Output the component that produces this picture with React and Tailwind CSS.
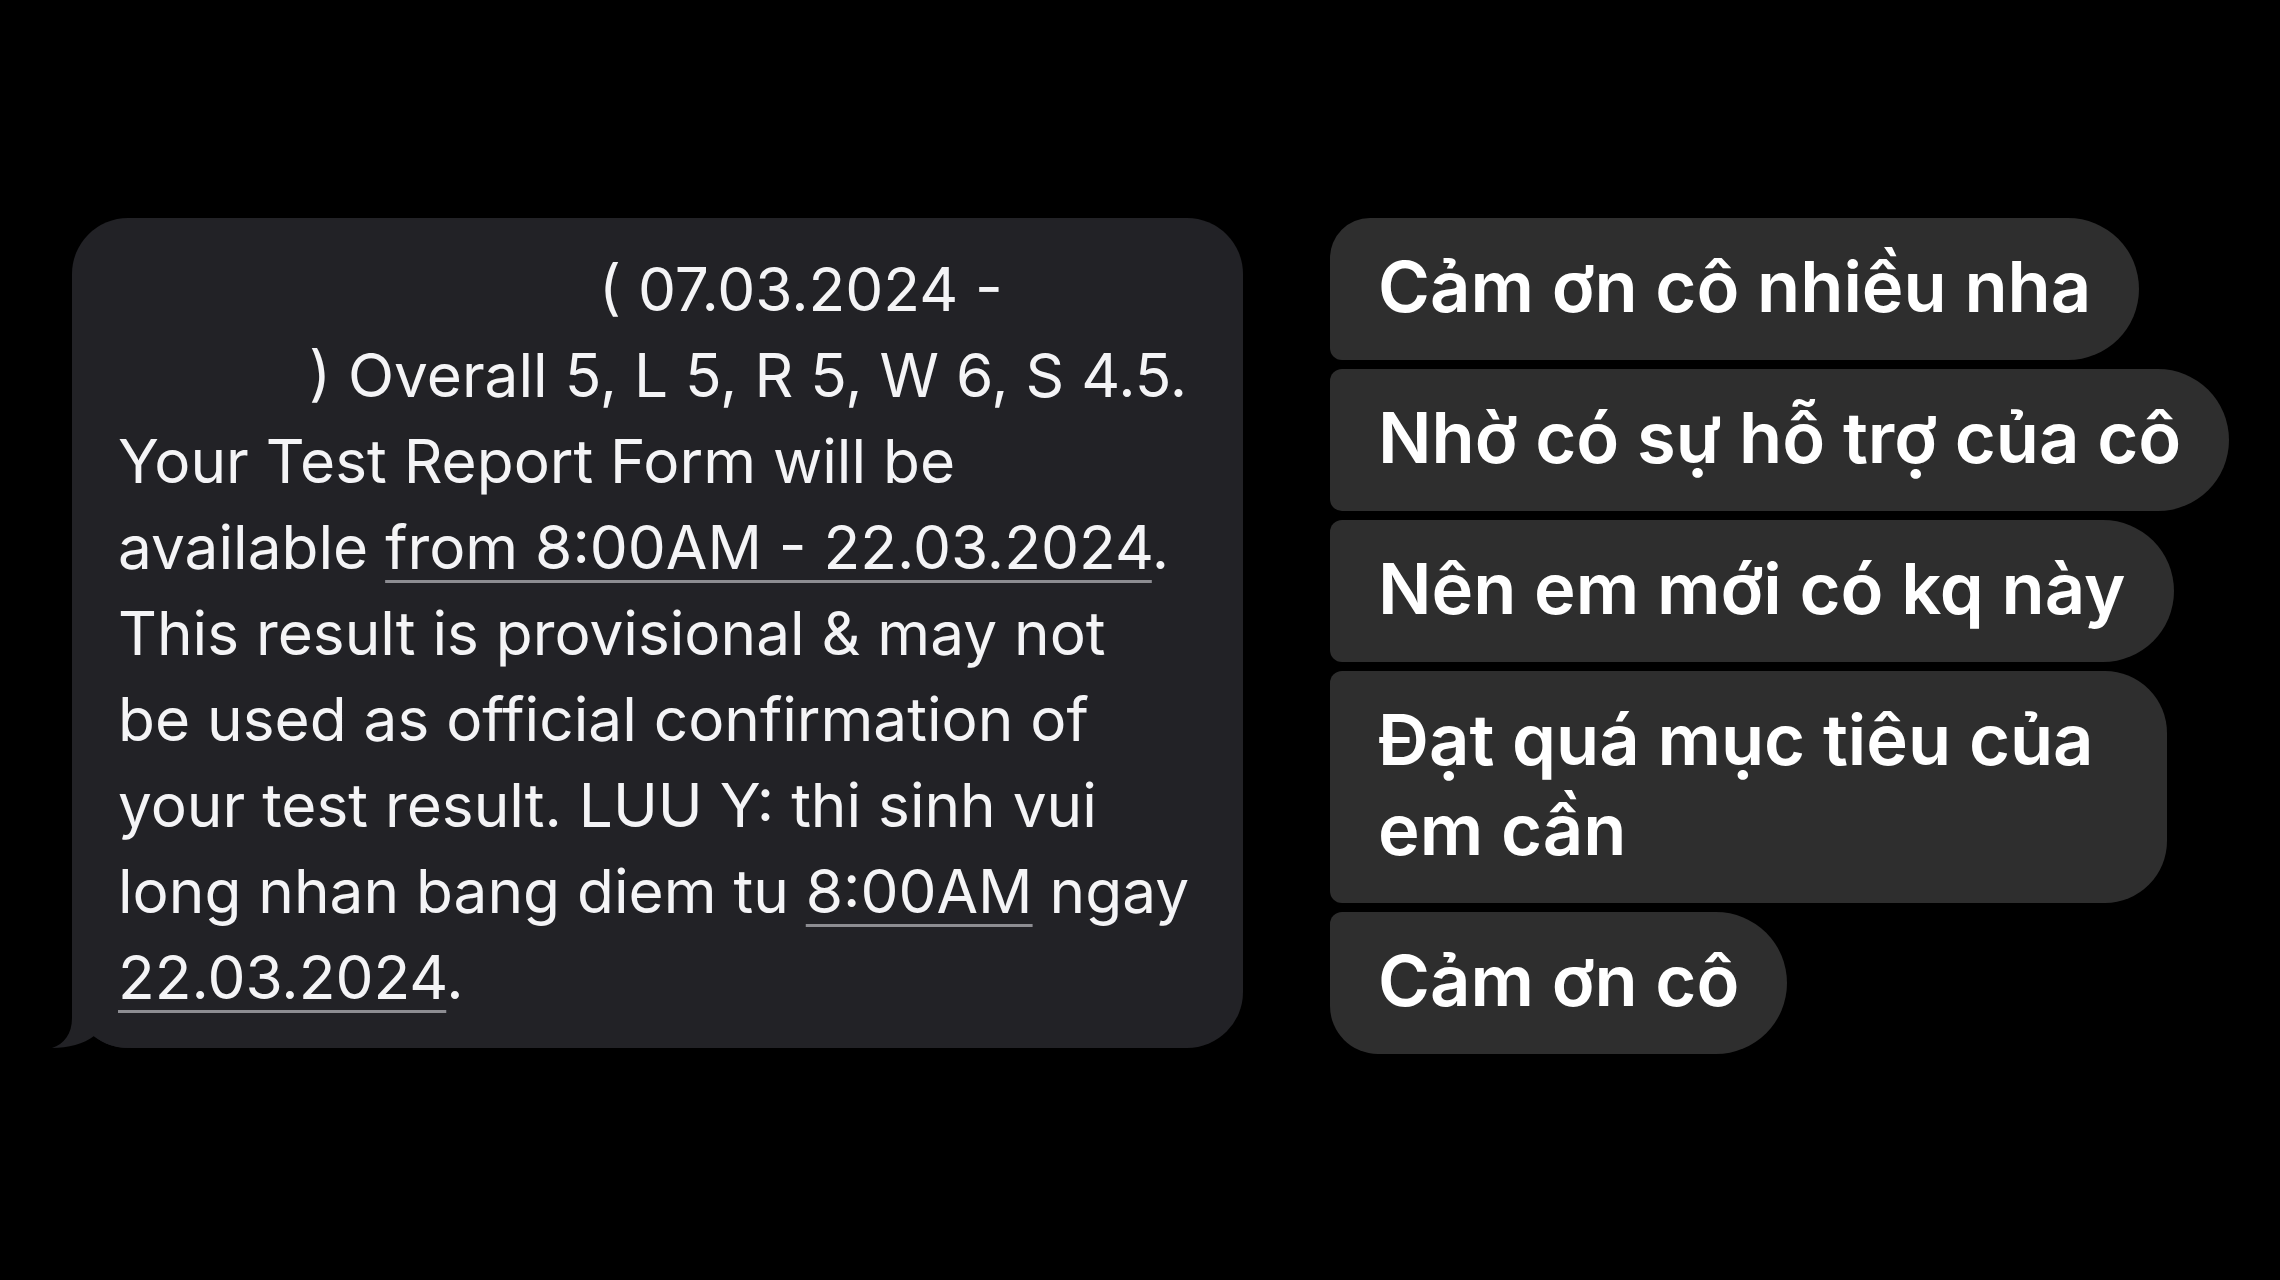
import React from "react";

const U = "underline decoration-[#8d8d92] decoration-[length:3px] underline-offset-[11px]";

function LeftBubble() {
  return (
    <div className="relative w-[1171px] shrink-0 rounded-[56px] bg-[#222226] pt-[29px] pb-[27px] pl-[46px] text-[60.3px] leading-[86px] text-[#f4f4f6] [font-family:Inter,'Liberation_Sans',sans-serif]">
      <svg
        className="absolute left-[-20px] bottom-0"
        width="80"
        height="60"
        viewBox="0 0 80 60"
      >
        <path
          d="M20 0 L20 30 C20 46 12 56 0 60 C16 60 32 56 42 48 C52 56 62 60 80 60 L80 0 Z"
          fill="#222226"
        />
      </svg>
      <div className="relative flex flex-col whitespace-pre">
        <div className="pl-[481px]">( 07.03.2024 -</div>
        <div className="pl-[191px]">) Overall 5, L 5, R 5, W 6, S 4.5.</div>
        <div>Your Test Report Form will be</div>
        <div>
          available <span className={U}>from 8:00AM - 22.03.2024</span>.
        </div>
        <div>This result is provisional &amp; may not</div>
        <div>be used as official confirmation of</div>
        <div>your test result. LUU Y: thi sinh vui</div>
        <div>
          long nhan bang diem tu <span className={U}>8:00AM</span> ngay
        </div>
        <div>
          <span className={U}>22.03.2024</span>.
        </div>
      </div>
    </div>
  );
}

function Bubble({ children, className }) {
  return (
    <div
      className={
        "bg-[#2e2e2e] pt-[24px] pb-[28px] pl-[48px] pr-[48px] text-[70.5px] leading-[90px] font-semibold text-white whitespace-pre " +
        className
      }
    >
      {children}
    </div>
  );
}

export default function App() {
  return (
    <div className="w-[2280px] h-[1280px] bg-black flex items-start pt-[218px] pl-[72px] gap-[87px] [font-family:Inter,'Liberation_Sans',sans-serif]">
      <LeftBubble />
      <div className="flex flex-col items-start gap-[9px]">
        <Bubble className="rounded-tl-[40px] rounded-bl-[12px] rounded-r-[71px]">
          Cảm ơn cô nhiều nha
        </Bubble>
        <Bubble className="rounded-l-[12px] rounded-r-[71px]">
          Nhờ có sự hỗ trợ của cô
        </Bubble>
        <Bubble className="rounded-l-[12px] rounded-r-[71px]">
          Nên em mới có kq này
        </Bubble>
        <Bubble className="w-[837px] rounded-l-[12px] rounded-r-[62px]">
          {"Đạt quá mục tiêu của\nem cần"}
        </Bubble>
        <Bubble className="rounded-tl-[12px] rounded-bl-[48px] rounded-r-[71px]">
          Cảm ơn cô
        </Bubble>
      </div>
    </div>
  );
}
